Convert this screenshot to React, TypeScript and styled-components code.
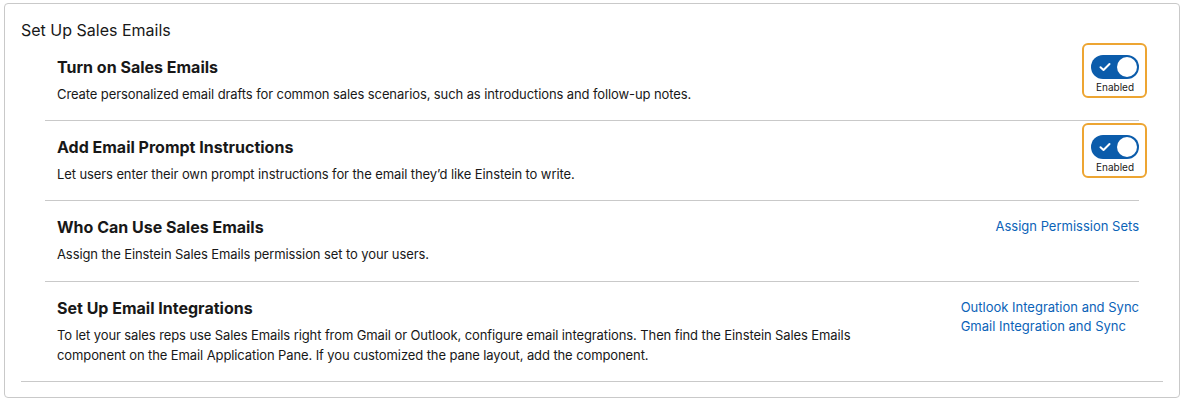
import React from "react";
import styled, { createGlobalStyle } from "styled-components";

const Global = createGlobalStyle`
  html, body { margin: 0; padding: 0; background: #fff; }
  body { padding: 3px 2px 0 4px; font-family: Inter, "Noto Sans", "Liberation Sans", sans-serif; color: #181818; }
  * { box-sizing: border-box; }
`;

const Card = styled.div`
  width: 1176px;
  height: 395px;
  border: 1px solid #c9c9c9;
  border-radius: 4px;
  padding: 15px 16px 15px 16px;
  background: #fff;
`;

const Title = styled.h2`
  margin: 0;
  font-size: 16px;
  line-height: 22px;
  font-weight: 400;
  color: #181818;
`;

const Section = styled.div`
  border-bottom: 1px solid #c9c9c9;
`;

const Rows = styled.div`
  margin: 0 24px;
`;

const Row = styled.div<{ $tall?: boolean; $last?: boolean }>`
  display: flex;
  justify-content: space-between;
  align-items: flex-start;
  padding: 15px 0 ${(p) => (p.$tall ? "17px" : "16px")} 12px;
  border-bottom: ${(p) => (p.$last ? "none" : "1px solid #c9c9c9")};
`;

const Text = styled.div`
  display: flex;
  flex-direction: column;
  gap: 6px;
  max-width: 820px;
`;

const Heading = styled.h3`
  margin: 0;
  font-size: 16px;
  line-height: 22px;
  font-weight: 700;
  color: #181818;
`;

const Desc = styled.p`
  margin: 0;
  font-size: 13px;
  line-height: 20px;
  letter-spacing: -0.1px;
  color: #181818;
`;

const Links = styled.div`
  display: flex;
  flex-direction: column;
  align-items: flex-start;
  padding-top: 1px;
`;

const Link = styled.a`
  font-size: 13px;
  line-height: 19px;
  color: #0b63b8;
  text-decoration: none;
`;

const ToggleBox = styled.div`
  margin-top: -13px;
  margin-right: -8px;
  border: 2px solid #eda532;
  border-radius: 6px;
  padding: 10px 6px 2px 7px;
  display: flex;
  flex-direction: column;
  align-items: center;
`;

const Track = styled.div`
  width: 48px;
  height: 24px;
  border-radius: 12px;
  background: #0b5cab;
  position: relative;
  display: flex;
  align-items: center;
  padding-left: 8px;
`;

const Knob = styled.div`
  position: absolute;
  right: 2px;
  top: 2px;
  width: 20px;
  height: 20px;
  border-radius: 50%;
  background: #fff;
`;

const Label = styled.span`
  font-size: 10px;
  line-height: 14px;
  color: #181818;
  margin-top: 1px;
`;

const Toggle = () => (
  <ToggleBox>
    <Track>
      <svg width="12" height="10" viewBox="0 0 12 10">
        <path d="M1.5 5.2 L4.5 8 L10.5 2" fill="none" stroke="#fff" strokeWidth="2" strokeLinecap="round" strokeLinejoin="round" />
      </svg>
      <Knob />
    </Track>
    <Label>Enabled</Label>
  </ToggleBox>
);

export default function App() {
  return (
    <>
      <Global />
      <Card>
        <Title>Set Up Sales Emails</Title>
        <Section>
          <Rows>
            <Row>
              <Text>
                <Heading>Turn on Sales Emails</Heading>
                <Desc>Create personalized email drafts for common sales scenarios, such as introductions and follow-up notes.</Desc>
              </Text>
              <Toggle />
            </Row>
            <Row>
              <Text>
                <Heading>Add Email Prompt Instructions</Heading>
                <Desc>Let users enter their own prompt instructions for the email they’d like Einstein to write.</Desc>
              </Text>
              <Toggle />
            </Row>
            <Row $tall>
              <Text>
                <Heading>Who Can Use Sales Emails</Heading>
                <Desc>Assign the Einstein Sales Emails permission set to your users.</Desc>
              </Text>
              <Links>
                <Link href="#">Assign Permission Sets</Link>
              </Links>
            </Row>
            <Row $last>
              <Text>
                <Heading>Set Up Email Integrations</Heading>
                <Desc>
                  To let your sales reps use Sales Emails right from Gmail or Outlook, configure email integrations. Then find the Einstein Sales Emails component on the Email Application Pane. If you customized the pane layout, add the component.
                </Desc>
              </Text>
              <Links>
                <Link href="#">Outlook Integration and Sync</Link>
                <Link href="#">Gmail Integration and Sync</Link>
              </Links>
            </Row>
          </Rows>
        </Section>
      </Card>
    </>
  );
}
